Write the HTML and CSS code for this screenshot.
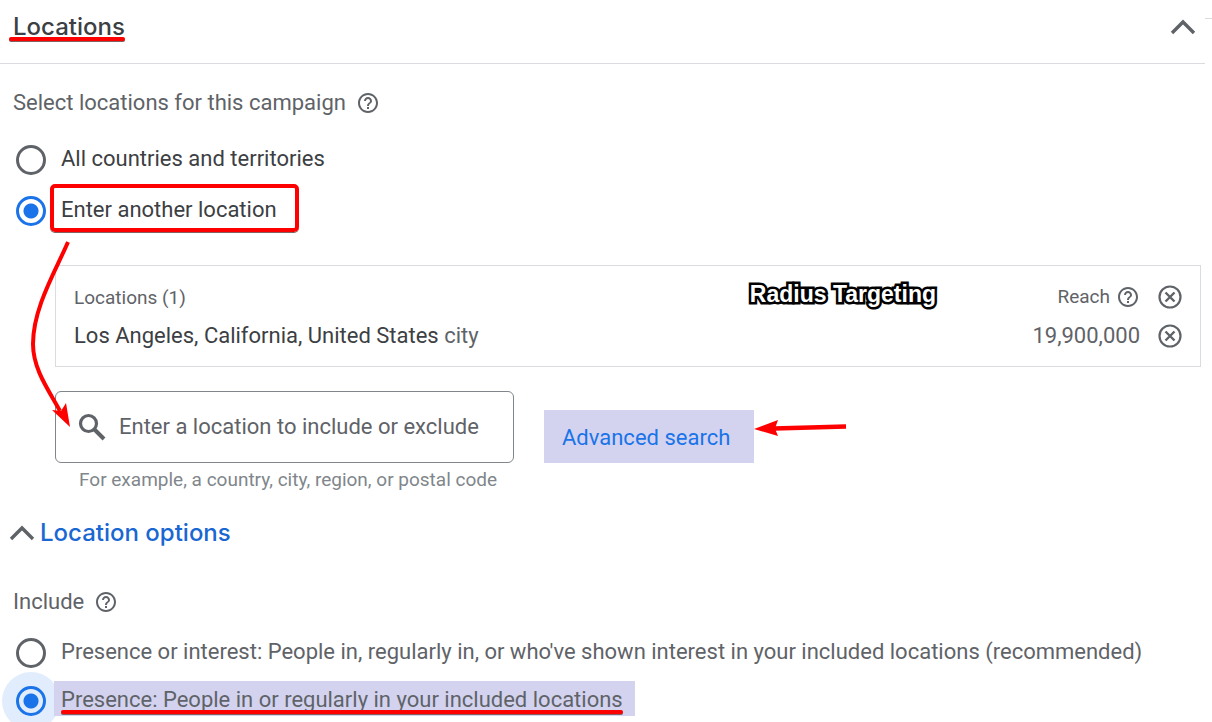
FILE: index.html
```
<!doctype html>
<html lang="en">
<head>
	<meta charset="UTF-8">
	<title>Locations</title>
	<link rel="stylesheet" href="styles.css">
</head>
<body>
	<svg class="sprite" aria-hidden="true">
		<symbol id="help" viewBox="0 0 24 24">
			<path d="M11 18h2v-2h-2v2zm1-16C6.480 2 2 6.480 2 12s4.480 10 10 10 10-4.480 10-10S17.520 2 12 2zm0 18c-4.410 0-8-3.590-8-8s3.590-8 8-8 8 3.590 8 8-3.590 8-8 8zm0-14c-2.210 0-4 1.790-4 4h2c0-1.100.9-2 2-2s2 .9 2 2c0 2-3 1.750-3 5h2c0-2.250 3-2.500 3-5 0-2.210-1.790-4-4-4z"/>
		</symbol>
		<symbol id="remove" viewBox="0 0 24 24">
			<circle cx="12" cy="12" r="10.500" fill="none" stroke="currentColor" stroke-width="2.200"/>
			<path d="M7.500 7.500l9 9M16.500 7.500l-9 9" fill="none" stroke="currentColor" stroke-width="2.400"/>
		</symbol>
		<symbol id="up" viewBox="0 0 26 16">
			<path d="M2 14L13 3l11 11" fill="none" stroke="currentColor" stroke-width="3.400"/>
		</symbol>
	</svg>

	<header class="header">
		<h2 class="title">Locations</h2>
		<button class="icon-btn" type="button" aria-label="Collapse"><svg class="chevron"><use href="#up"/></svg></button>
	</header>

	<main class="content">
		<div class="intro">
			<span>Select locations for this campaign</span>
			<button class="icon-btn" type="button" aria-label="Help"><svg class="help"><use href="#help"/></svg></button>
		</div>

		<div class="option">
			<input type="radio" name="area" id="area-all">
			<label for="area-all">All countries and territories</label>
		</div>
		<div class="option">
			<input type="radio" name="area" id="area-other" checked>
			<label class="boxed" for="area-other">Enter another location</label>
		</div>

		<div class="picker">
			<div class="card">
				<table class="places">
					<thead>
						<tr>
							<th class="name">Locations (1)</th>
							<th class="reach"><div class="reach-head">Reach <button class="icon-btn" type="button" aria-label="About reach"><svg class="help"><use href="#help"/></svg></button></div></th>
							<th class="action"><button class="icon-btn" type="button" aria-label="Remove all"><svg class="remove"><use href="#remove"/></svg></button></th>
						</tr>
					</thead>
					<tbody>
						<tr>
							<td class="name">Los Angeles, California, United States <span class="kind">city</span></td>
							<td class="reach">19,900,000</td>
							<td class="action"><button class="icon-btn" type="button" aria-label="Remove Los Angeles"><svg class="remove"><use href="#remove"/></svg></button></td>
						</tr>
					</tbody>
				</table>
				<strong class="note">Radius Targeting</strong>
			</div>

			<div class="search-row">
				<div class="search">
					<svg class="lens" viewBox="0 0 28 28"><circle cx="10.500" cy="10.500" r="8" fill="none" stroke="currentColor" stroke-width="3.200"/><path d="M16.500 16.500l9.500 9.500" stroke="currentColor" stroke-width="4"/></svg>
					<input type="text" aria-label="Location" aria-describedby="hint" placeholder="Enter a location to include or exclude">
				</div>
				<a class="advanced" href="#">Advanced search
					<svg class="arrow-left" viewBox="0 0 94 18"><path d="M20 8.500L92 6.500" stroke="#f00" stroke-width="4.500"/><path d="M0 9L24 0l-3 8.500L24 16z" fill="#f00"/></svg>
				</a>
			</div>
			<p class="hint" id="hint">For example, a country, city, region, or postal code</p>

			<svg class="arrow-down" viewBox="0 0 42 190"><path d="M37 2C25 30 2 68 2 104c0 26 17 48 27 67" fill="none" stroke="#f00" stroke-width="4"/><path d="M39 187L21 170l9 1 5-8z" fill="#f00"/></svg>
		</div>

		<button class="toggle" type="button"><svg class="chevron"><use href="#up"/></svg>Location options</button>

		<div class="intro include">
			<span>Include</span>
			<button class="icon-btn" type="button" aria-label="Help"><svg class="help"><use href="#help"/></svg></button>
		</div>

		<div class="option compact">
			<input type="radio" name="include" id="inc-interest">
			<label for="inc-interest">Presence or interest: People in, regularly in, or who've shown interest in your included locations (recommended)</label>
		</div>
		<div class="option compact">
			<input class="focused" type="radio" name="include" id="inc-presence" checked>
			<label class="marked" for="inc-presence"><span class="underlined">Presence: People in or regularly in your included locations</span></label>
		</div>
	</main>
</body>
</html>
```

FILE: styles.css
```
*{
	box-sizing: border-box;
}
body{
	margin: 0;
	background: #fff;
	color: #3c4043;
	font-family: Roboto, "Liberation Sans", sans-serif;
	font-size: 22px;
	line-height: 28px;
	overflow: hidden;
}
.sprite{
	display: none;
}
svg{
	display: block;
}
.icon-btn{
	border: 0;
	padding: 0;
	background: none;
	color: #5f6368;
	cursor: pointer;
}
.help{
	width: 24px;
	height: 24px;
	fill: currentColor;
}
.remove{
	width: 24px;
	height: 24px;
}
.chevron{
	width: 26px;
	height: 16px;
	color: #5f6368;
}

.header{
	position: relative;
	display: flex;
	align-items: center;
	justify-content: space-between;
	height: 64px;
	margin-right: 7px;
	padding: 0 9px 10px 13px;
	border-bottom: 1px solid #dadce0;
}
/* edge of the next panel */
.header::after{
	content: "";
	position: absolute;
	top: 18px;
	left: 100%;
	width: 7px;
	height: 1px;
	background: #dadce0;
}
.title{
	position: relative;
	margin: 0;
	font-family: Inter, Roboto, sans-serif;
	font-size: 24px;
	font-weight: 500;
}
.title::after,
.underlined::after{
	content: "";
	position: absolute;
	left: 0;
	right: 0;
	bottom: 0;
	height: 4px;
	border-radius: 2px;
	background: #f00;
	box-shadow: 0 1px 0 #84605f;
}
.title::after{
	left: -4px;
}

.intro{
	display: flex;
	align-items: center;
	gap: 10px;
	padding: 25px 13px 17px;
	color: #5f6368;
}
.option{
	display: flex;
	align-items: center;
	gap: 8px;
	min-height: 51px;
	padding-left: 16px;
}
.option input{
	flex: none;
	width: 30px;
	height: 30px;
	margin: 0;
	appearance: none;
	border: 3px solid #5f6368;
	border-radius: 50%;
}
.option input:checked{
	border-color: #1a73e8;
	background: radial-gradient(circle, #1a73e8 7px, transparent 8px);
}
.option input.focused{
	background-color: #e1edfc;
	box-shadow: 0 0 0 14px #e1edfc;
}
.option label{
	position: relative;
	margin-bottom: 2px;
	padding: 0 12px 0 7px;
}
.boxed::after{
	content: "";
	position: absolute;
	top: -12px;
	bottom: -8px;
	left: -4px;
	right: -10px;
	border: 4px solid #f00;
	border-radius: 5px;
	box-shadow: 0 1px 0 #84605f;
}
.compact{
	min-height: 48px;
	color: #5f6368;
}
.option .marked{
	margin-bottom: 5px;
	padding: 5px 12px 2px 7px;
	background: #d3d3f0;
}
.underlined{
	position: relative;
}
.underlined::after{
	bottom: -2px;
}

.picker{
	position: relative;
	padding: 29px 11px 0 55px;
}
.card{
	position: relative;
	padding: 11px 18px;
	border: 1px solid #dadce0;
}
.places{
	width: 100%;
	border-collapse: collapse;
}
.places th,
.places td{
	height: 39px;
	padding: 0;
	font-weight: 400;
	text-align: left;
}
.places th{
	font-size: 19px;
	color: #5f6368;
}
.places th.name{
	padding-top: 3px;
}
.places .reach{
	color: #5f6368;
	text-align: right;
}
.reach-head{
	display: flex;
	align-items: center;
	justify-content: flex-end;
	gap: 6px;
}
.places .action{
	width: 42px;
}
.action .icon-btn{
	display: block;
	margin-left: auto;
}
.kind{
	color: #5f6368;
}
.note{
	position: absolute;
	top: 14px;
	right: 264px;
	color: #fff;
	font-family: "Liberation Sans", Arial, sans-serif;
	font-size: 23px;
	-webkit-text-stroke: 5px #000;
	paint-order: stroke fill;
}

.search-row{
	display: flex;
	align-items: flex-end;
	gap: 30px;
	margin-top: 24px;
}
.search{
	display: flex;
	align-items: center;
	gap: 13px;
	flex: 0 1 459px;
	height: 72px;
	padding: 0 22px;
	border: 1px solid #80868b;
	border-radius: 6px;
}
.lens{
	flex: none;
	width: 28px;
	height: 28px;
	color: #5f6368;
}
.search input{
	flex: 1;
	min-width: 0;
	border: 0;
	padding: 0;
	outline: 0;
	background: none;
	font: inherit;
}
.search input::placeholder{
	color: #5f6368;
	opacity: 1;
}
.advanced{
	position: relative;
	padding: 14px 24px 11px 18px;
	background: #d3d3f0;
	color: #1a73e8;
	text-decoration: none;
}
.arrow-left{
	position: absolute;
	top: 10px;
	left: 100%;
	width: 94px;
	height: 18px;
}
.hint{
	margin: 3px 0 0 24px;
	color: #80868b;
	font-size: 19px;
}
.arrow-down{
	position: absolute;
	top: 4px;
	left: 31px;
	width: 42px;
	height: 190px;
}

.toggle{
	display: flex;
	align-items: center;
	gap: 5px;
	margin-top: 25px;
	padding: 0 9px;
	border: 0;
	background: none;
	color: #1967d2;
	font-family: Inter, Roboto, sans-serif;
	font-size: 24px;
	font-weight: 500;
	line-height: 28px;
	cursor: pointer;
}
.include{
	padding: 41px 13px 13px;
}
```
